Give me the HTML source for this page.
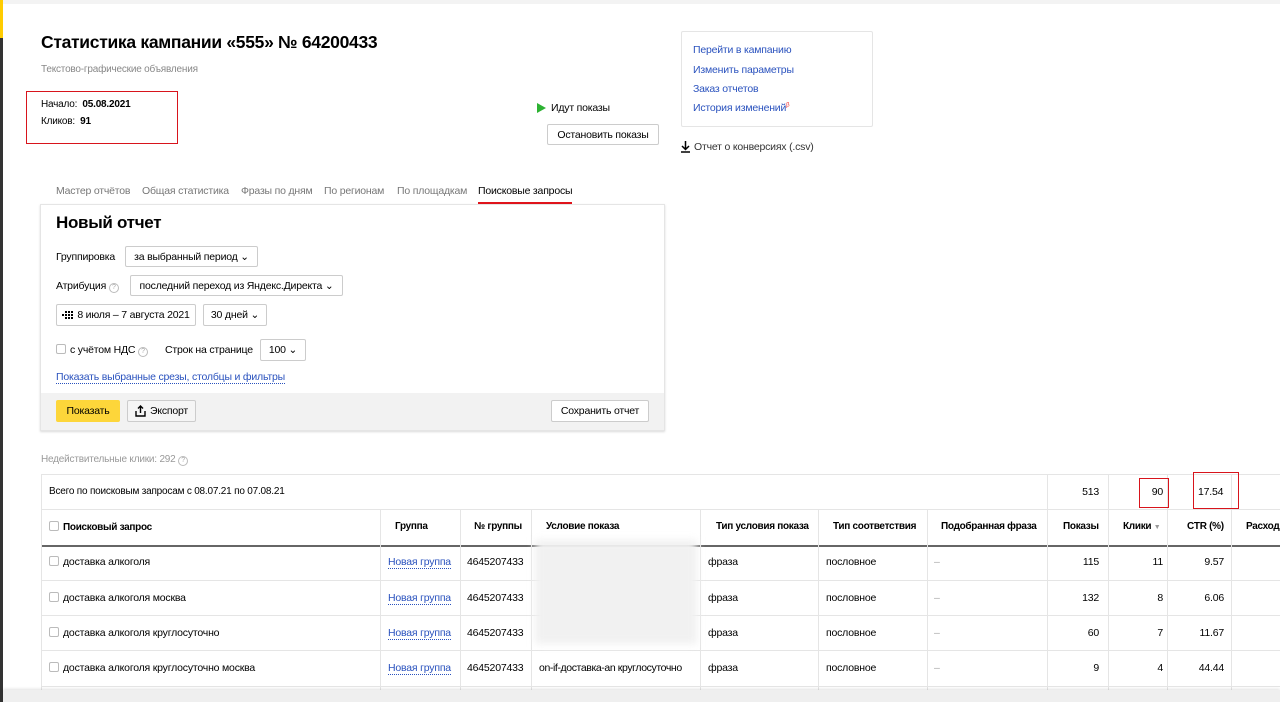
<!DOCTYPE html>
<html><head><meta charset="utf-8"><style>
*{margin:0;padding:0;box-sizing:border-box}
body{width:1280px;height:702px;overflow:hidden;background:#fff;font-family:"Liberation Sans","Noto Sans CJK SC",sans-serif;font-size:10.5px;letter-spacing:-0.2px;color:#000;position:relative}
.a{position:absolute;white-space:nowrap}
.btn{position:absolute;border:1px solid #ccc;border-radius:2px;background:#fff;font-size:10.5px;display:flex;align-items:center;justify-content:center;white-space:nowrap}
.lnk{color:#2a52be}
.cell{position:absolute;white-space:nowrap;font-size:10.5px}
.h{font-weight:bold;font-size:10px;letter-spacing:-0.3px}
.chk{display:inline-block;width:10px;height:10px;border:1px solid #bbb;border-radius:2px;vertical-align:-1px;margin-right:4px;background:#fff}
.vl{position:absolute;width:1px;background:#e5e5e5}
.hl{position:absolute;height:1px;background:#e5e5e5}
.red{position:absolute;border:1.5px solid #d8141c}
.blur{position:absolute;background:#f1f1f1;filter:blur(4px)}
.q{display:inline-block;width:10px;height:10px;border:1px solid #bbb;border-radius:50%;font-size:7px;line-height:8px;text-align:center;color:#aaa;vertical-align:0}
</style></head><body>
<div class="a" style="left:0;top:0;width:1280px;height:4px;background:#f3f3f3"></div>
<div class="a" style="left:0;top:0;width:3px;height:38px;background:#fc0"></div>
<div class="a" style="left:0;top:38px;width:3px;height:664px;background:#333"></div>

<div class="a" style="left:41px;top:32px;font-size:17.5px;font-weight:bold;letter-spacing:-0.3px">Статистика кампании «555» № 64200433</div>
<div class="a" style="left:41px;top:64px;font-size:10px;color:#888">Текстово-графические объявления</div>
<div class="red" style="left:26px;top:91px;width:152px;height:53px"></div>
<div class="a" style="left:41px;top:99px;font-size:10px">Начало:&nbsp;&nbsp;<b>05.08.2021</b></div>
<div class="a" style="left:41px;top:116px;font-size:10px">Кликов:&nbsp;&nbsp;<b>91</b></div>

<div class="a" style="left:537px;top:103px;width:0;height:0;border-left:9px solid #2db232;border-top:5px solid transparent;border-bottom:5px solid transparent"></div>
<div class="a" style="left:551px;top:102px">Идут показы</div>
<div class="btn" style="left:547px;top:124px;width:112px;height:21px">Остановить показы</div>

<div class="a" style="left:681px;top:31px;width:192px;height:96px;border:1px solid #e5e5e5;border-radius:2px"></div>
<div class="a lnk" style="left:693px;top:44px">Перейти в кампанию</div>
<div class="a lnk" style="left:693px;top:64px">Изменить параметры</div>
<div class="a lnk" style="left:693px;top:83px">Заказ отчетов</div>
<div class="a lnk" style="left:693px;top:102px">История изменений<sup style="color:#e33;font-size:6px">β</sup></div>
<svg class="a" style="left:680px;top:140px" width="11" height="13" viewBox="0 0 11 13"><path d="M5.5 1v8M2 6l3.5 3.5L9 6M1 12h9" stroke="#000" stroke-width="1.5" fill="none"/></svg>
<div class="a" style="left:694px;top:141px;color:#333">Отчет о конверсиях (.csv)</div>

<div class="a" style="left:56px;top:185px;color:#777">Мастер отчётов</div>
<div class="a" style="left:142px;top:185px;color:#777">Общая статистика</div>
<div class="a" style="left:241px;top:185px;color:#777">Фразы по дням</div>
<div class="a" style="left:324px;top:185px;color:#777">По регионам</div>
<div class="a" style="left:397px;top:185px;color:#777">По площадкам</div>
<div class="a" style="left:478px;top:185px;color:#000">Поисковые запросы</div>
<div class="a" style="left:478px;top:202px;width:94px;height:2px;background:#e0141c"></div>

<div class="a" style="left:40px;top:204px;width:625px;height:227px;border:1px solid #e5e5e5;box-shadow:0 1px 2px rgba(0,0,0,.15)"></div>
<div class="a" style="left:56px;top:213px;font-size:17px;font-weight:bold;letter-spacing:-0.3px">Новый отчет</div>
<div class="a" style="left:56px;top:251px">Группировка</div>
<div class="btn" style="left:125px;top:246px;width:133px;height:21px">за выбранный период&nbsp;⌄</div>
<div class="a" style="left:56px;top:280px">Атрибуция <span class="q">?</span></div>
<div class="btn" style="left:130px;top:275px;width:213px;height:21px">последний переход из Яндекс.Директа ⌄</div>
<div class="btn" style="left:56px;top:304px;width:140px;height:22px"><svg width="12" height="8" viewBox="0 0 12 8" style="margin-right:3px"><g fill="#000"><rect x="0" y="3" width="2" height="2"/><rect x="3" y="0" width="2" height="2"/><rect x="3" y="3" width="2" height="2"/><rect x="3" y="6" width="2" height="2"/><rect x="6" y="0" width="2" height="2"/><rect x="6" y="3" width="2" height="2"/><rect x="6" y="6" width="2" height="2"/><rect x="9" y="0" width="2" height="2"/><rect x="9" y="3" width="2" height="2"/><rect x="9" y="6" width="2" height="2"/></g></svg>8 июля – 7 августа 2021</div>
<div class="btn" style="left:203px;top:304px;width:64px;height:22px">30 дней ⌄</div>
<div class="a" style="left:56px;top:344px"><span class="chk"></span>с учётом НДС <span class="q">?</span></div>
<div class="a" style="left:165px;top:344px">Строк на странице</div>
<div class="btn" style="left:260px;top:339px;width:46px;height:22px">100 ⌄</div>
<div class="a lnk" style="left:56px;top:371px;border-bottom:1px dotted #2a52be">Показать выбранные срезы, столбцы и фильтры</div>
<div class="a" style="left:41px;top:393px;width:623px;height:37px;background:#f2f2f2"></div>
<div class="a" style="left:56px;top:400px;width:64px;height:22px;background:#fdd63a;border-radius:2px;display:flex;align-items:center;justify-content:center">Показать</div>
<div class="btn" style="left:127px;top:400px;width:69px;height:22px;background:#f5f5f5"><svg width="11" height="12" viewBox="0 0 11 12" style="margin-right:4px"><path d="M5.5 8V1M3 3.5L5.5 1 8 3.5M1 6v5h9V6" stroke="#000" stroke-width="1.4" fill="none"/></svg>Экспорт</div>
<div class="btn" style="left:551px;top:400px;width:98px;height:22px">Сохранить отчет</div>

<div class="a" style="left:41px;top:454px;font-size:10px;color:#999">Недействительные клики: 292 <span class="q">?</span></div>

<div class="hl" style="left:41px;top:474px;width:1239px"></div>
<div class="hl" style="left:41px;top:509px;width:1239px"></div>
<div class="a" style="left:41px;top:545px;width:1239px;height:1.5px;background:#666"></div>
<div class="hl" style="left:41px;top:580px;width:1239px"></div>
<div class="hl" style="left:41px;top:615px;width:1239px"></div>
<div class="hl" style="left:41px;top:650px;width:1239px"></div>
<div class="hl" style="left:41px;top:686px;width:1239px"></div>
<div class="vl" style="left:41px;top:474px;height:216px"></div>
<div class="vl" style="left:1047px;top:474px;height:216px"></div>
<div class="vl" style="left:1108px;top:474px;height:216px"></div>
<div class="vl" style="left:1167px;top:474px;height:216px"></div>
<div class="vl" style="left:1231px;top:474px;height:216px"></div>
<div class="vl" style="left:380px;top:509px;height:181px"></div>
<div class="vl" style="left:460px;top:509px;height:181px"></div>
<div class="vl" style="left:531px;top:509px;height:181px"></div>
<div class="vl" style="left:700px;top:509px;height:181px"></div>
<div class="vl" style="left:818px;top:509px;height:181px"></div>
<div class="vl" style="left:927px;top:509px;height:181px"></div>

<div class="cell" style="left:49px;top:486px;font-size:10px">Всего по поисковым запросам с 08.07.21 по 07.08.21</div>
<div class="cell" style="left:1047px;width:52px;text-align:right;top:486px">513</div>
<div class="cell" style="left:1108px;width:55px;text-align:right;top:486px">90</div>
<div class="cell" style="left:1198px;top:486px">17.54</div>
<div class="red" style="left:1139px;top:478px;width:30px;height:30px"></div>
<div class="red" style="left:1193px;top:472px;width:46px;height:37px"></div>

<div class="cell h" style="left:49px;top:521px"><span class="chk"></span>Поисковый запрос</div>
<div class="cell h" style="left:395px;top:521px">Группа</div>
<div class="cell h" style="left:474px;top:521px">№ группы</div>
<div class="cell h" style="left:546px;top:521px">Условие показа</div>
<div class="cell h" style="left:716px;top:521px">Тип условия показа</div>
<div class="cell h" style="left:833px;top:521px">Тип соответствия</div>
<div class="cell h" style="left:941px;top:521px">Подобранная фраза</div>
<div class="cell h" style="left:1063px;top:521px">Показы</div>
<div class="cell h" style="left:1123px;top:521px">Клики <span style="color:#999;font-weight:normal;font-size:7px">▼</span></div>
<div class="cell h" style="left:1187px;top:521px">CTR (%)</div>
<div class="cell h" style="left:1246px;top:521px">Расход</div>

<div class="blur" style="left:535px;top:540px;width:162px;height:104px"></div>

<div class="cell" style="left:49px;top:556px"><span class="chk"></span>доставка алкоголя</div>
<div class="cell" style="left:49px;top:592px"><span class="chk"></span>доставка алкоголя москва</div>
<div class="cell" style="left:49px;top:627px"><span class="chk"></span>доставка алкоголя круглосуточно</div>
<div class="cell" style="left:49px;top:662px"><span class="chk"></span>доставка алкоголя круглосуточно москва</div>
<div class="cell lnk" style="left:388px;top:556px;border-bottom:1px dotted #2a52be">Новая группа</div>
<div class="cell lnk" style="left:388px;top:592px;border-bottom:1px dotted #2a52be">Новая группа</div>
<div class="cell lnk" style="left:388px;top:627px;border-bottom:1px dotted #2a52be">Новая группа</div>
<div class="cell lnk" style="left:388px;top:662px;border-bottom:1px dotted #2a52be">Новая группа</div>
<div class="cell" style="left:467px;top:556px">4645207433</div>
<div class="cell" style="left:467px;top:592px">4645207433</div>
<div class="cell" style="left:467px;top:627px">4645207433</div>
<div class="cell" style="left:467px;top:662px">4645207433</div>
<div class="cell" style="left:539px;top:662px;letter-spacing:-0.4px">on-if-доставка-an круглосуточно</div>

<div class="cell" style="left:708px;top:556px">фраза</div><div class="cell" style="left:826px;top:556px">пословное</div><div class="cell" style="left:934px;top:556px;color:#aaa">–</div>
<div class="cell" style="left:708px;top:592px">фраза</div><div class="cell" style="left:826px;top:592px">пословное</div><div class="cell" style="left:934px;top:592px;color:#aaa">–</div>
<div class="cell" style="left:708px;top:627px">фраза</div><div class="cell" style="left:826px;top:627px">пословное</div><div class="cell" style="left:934px;top:627px;color:#aaa">–</div>
<div class="cell" style="left:708px;top:662px">фраза</div><div class="cell" style="left:826px;top:662px">пословное</div><div class="cell" style="left:934px;top:662px;color:#aaa">–</div>

<div class="cell" style="left:1047px;width:52px;text-align:right;top:556px">115</div><div class="cell" style="left:1108px;width:55px;text-align:right;top:556px">11</div><div class="cell" style="left:1167px;width:57px;text-align:right;top:556px">9.57</div>
<div class="cell" style="left:1047px;width:52px;text-align:right;top:592px">132</div><div class="cell" style="left:1108px;width:55px;text-align:right;top:592px">8</div><div class="cell" style="left:1167px;width:57px;text-align:right;top:592px">6.06</div>
<div class="cell" style="left:1047px;width:52px;text-align:right;top:627px">60</div><div class="cell" style="left:1108px;width:55px;text-align:right;top:627px">7</div><div class="cell" style="left:1167px;width:57px;text-align:right;top:627px">11.67</div>
<div class="cell" style="left:1047px;width:52px;text-align:right;top:662px">9</div><div class="cell" style="left:1108px;width:55px;text-align:right;top:662px">4</div><div class="cell" style="left:1167px;width:57px;text-align:right;top:662px">44.44</div>

<div class="a" style="left:3px;top:690px;width:1277px;height:12px;background:#efefef;box-shadow:0 -1px 3px rgba(0,0,0,.12)"></div>
</body></html>
